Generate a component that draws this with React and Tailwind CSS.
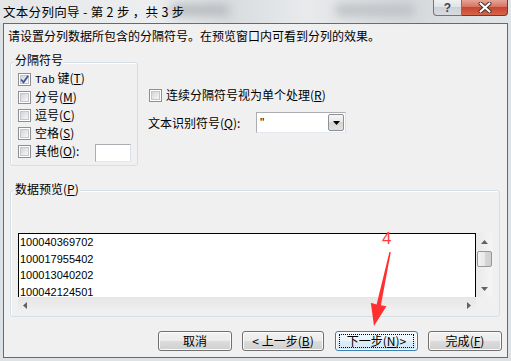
import React from "react";

// Win7 style "Text Import Wizard - step 2 of 3" dialog

function Mn({ k }) {
  return (
    <span>
      (<span className="underline underline-offset-1">{k}</span>)
    </span>
  );
}

function CheckBox({ checked }) {
  return (
    <span className="flex h-[13px] w-[13px] shrink-0 border border-[#8f8f8f] bg-white p-[1px]">
      <span className="relative flex-1 border border-[#c3c7cc] bg-gradient-to-br from-[#d2d5d9] to-[#f7f7f8]">
        {checked && (
          <svg className="absolute -left-[2px] -top-[2px]" width="11" height="11" viewBox="0 0 11 11">
            <path d="M2 5.5 L4.5 8.3 L9.2 1.8" stroke="#3b5699" strokeWidth="1.8" fill="none" />
          </svg>
        )}
      </span>
    </span>
  );
}

function Row({ checked, children, h = "h-[18px]" }) {
  return (
    <div className={`flex items-center gap-[4px] ${h}`}>
      <CheckBox checked={checked} />
      <span className="leading-[12px]">{children}</span>
    </div>
  );
}

function Btn({ w, focus, children }) {
  return (
    <div
      className={`flex h-[20px] ${w} items-center justify-center rounded-[3px] border ${
        focus
          ? "border-[#3c7fb1] bg-[linear-gradient(#f4fafe,#e9f4fb_50%,#dcedf8_50%,#d2e8f6)]"
          : "border-[#707070] bg-[linear-gradient(#f2f2f2,#ebebeb_50%,#dddddd_50%,#cfcfcf)]"
      } shadow-[inset_0_0_0_1px_#fbfbfb]`}
    >
      {focus ? (
        <span className="flex h-[14px] w-[calc(100%-6px)] items-center justify-center border border-dotted border-black leading-[12px]">
          {children}
        </span>
      ) : (
        <span className="leading-[12px]">{children}</span>
      )}
    </div>
  );
}

function Tri({ dir }) {
  const pts = {
    up: "0,4 3.5,0 7,4",
    down: "0,0 7,0 3.5,4",
    left: "4,0 4,7 0,3.5",
    right: "0,0 0,7 4,3.5",
  }[dir];
  const vert = dir === "up" || dir === "down";
  return (
    <svg width={vert ? 7 : 4} height={vert ? 4 : 7} viewBox={vert ? "0 0 7 4" : "0 0 4 7"}>
      <polygon points={pts} fill="#5f6368" />
    </svg>
  );
}

const rows = ["100040369702", "100017955402", "100013040202", "100042124501"];

export default function App() {
  return (
    <div className="relative h-[361px] w-[511px] overflow-hidden bg-[#dde2e7] font-['Noto_Sans_CJK_SC',sans-serif] text-[12px] text-black">
      {/* title bar */}
      <div className="relative flex h-[23px] items-start bg-[linear-gradient(90deg,#e4e6e8,#eceeef_30%,#d9dcdf_45%,#e8eaec_60%,#d6d9dc_80%,#e2e5e8)]">
        <div className="pointer-events-none absolute left-[170px] top-[4px] h-[12px] w-[60px] rounded-full bg-[#b9bcc0] blur-[5px]" />
        <div className="pointer-events-none absolute left-[335px] top-[4px] h-[12px] w-[80px] rounded-full bg-[#bfc2c6] blur-[5px]" />
        <span className="relative pl-[3px] pt-[5px] text-[12.5px] leading-[13px] tracking-[0.3px] whitespace-pre">文本分列向导 - 第 2 步 ，共 3 步</span>
        <div className="relative ml-auto mr-[3px] flex">
          <div className="flex h-[16px] w-[29px] items-center justify-center rounded-bl-[4px] border border-t-0 border-[#6f767e] bg-[linear-gradient(#eef0f2,#dfe2e5_50%,#cdd2d7_50%,#d8dce0)] font-['Liberation_Sans',sans-serif] text-[12px] font-bold leading-[14px] text-[#3d4653]">
            ?
          </div>
          <div className="flex h-[16px] w-[46px] items-center justify-center rounded-br-[4px] border border-l-0 border-t-0 border-[#6b3b35] bg-[linear-gradient(#e6a595,#d77462_45%,#c84530_50%,#d7644c)]">
            <svg width="14" height="11" viewBox="0 0 14 11">
              <path d="M2.5 1.5 L11.5 9.5 M11.5 1.5 L2.5 9.5" stroke="#4a2a26" strokeWidth="4" strokeLinecap="round" />
              <path d="M2.5 1.5 L11.5 9.5 M11.5 1.5 L2.5 9.5" stroke="#ffffff" strokeWidth="2.2" strokeLinecap="round" />
            </svg>
          </div>
        </div>
      </div>

      {/* client area */}
      <div className="mx-[3px] flex h-[335px] flex-col border border-[#666a6f] bg-[#f0f0f0]">
        <div className="pl-[4px] pt-[6px] leading-[12px]">请设置分列数据所包含的分隔符号。在预览窗口内可看到分列的效果。</div>

        <div className="mt-[20px] flex pl-[6px]">
          {/* delimiters group */}
          <div className="flex h-[104px] w-[128px] flex-col rounded-[3px] border border-[#d5dfe5] shadow-[inset_1px_1px_0_#ffffff]">
            <span className="-mt-[9px] ml-[3px] w-fit bg-[#f0f0f0] px-[1px] leading-[12px]">分隔符号</span>
            <div className="mt-[4px] flex flex-col pl-[7px]">
              <Row checked>
                <span className="font-['Liberation_Mono',monospace] text-[11px]">Tab</span> 键<Mn k="T" />
              </Row>
              <Row>
                分号<Mn k="M" />
              </Row>
              <Row>
                逗号<Mn k="C" />
              </Row>
              <Row>
                空格<Mn k="S" />
              </Row>
              <div className="flex h-[18px] items-center gap-[4px]">
                <CheckBox />
                <span className="leading-[12px]">
                  其他<Mn k="O" />:
                </span>
                <div className="ml-auto mr-[6px] mt-[4px] h-[18px] w-[36px] border border-[#abadb3] border-b-[#e3e9ef] border-r-[#dbdfe6] bg-white" />
              </div>
            </div>
          </div>

          {/* right column */}
          <div className="ml-[10px] flex flex-col pt-[25px]">
            <div className="ml-[1px] flex h-[16px] items-center gap-[4px]">
              <CheckBox />
              <span className="leading-[12px]">
                连续分隔符号视为单个处理<Mn k="R" />
              </span>
            </div>
            <div className="mt-[9px] flex h-[21px] items-center">
              <span className="w-[108px] leading-[12px]">
                文本识别符号<Mn k="Q" />:
              </span>
              <div className="flex h-[21px] w-[90px] items-center border border-[#abadb3] border-b-[#e3e9ef] border-r-[#dbdfe6] bg-white">
                <span className="pl-[3px] font-['Liberation_Sans',sans-serif] text-[12px] leading-[12px]">"</span>
                <div className="ml-auto mr-[1px] flex h-[17px] w-[16px] items-center justify-center rounded-[2px] border border-[#8d9195] bg-[linear-gradient(#f6f6f6,#e6e6e6_50%,#d6d6d6_50%,#e0e0e0)]">
                  <svg width="7" height="4" viewBox="0 0 7 4">
                    <polygon points="0,0 7,0 3.5,4" fill="#000" />
                  </svg>
                </div>
              </div>
            </div>
          </div>
        </div>

        {/* data preview group */}
        <div className="ml-[6px] mt-[24px] flex h-[127px] w-[490px] flex-col rounded-[3px] border border-[#d5dfe5] shadow-[inset_1px_1px_0_#ffffff]">
          <span className="-mt-[8px] ml-[3px] w-fit bg-[#f0f0f0] px-[1px] leading-[12px]">
            数据预览<Mn k="P" />
          </span>
          <div className="ml-[7px] mt-[38px] flex h-[80px] w-[474px] flex-col">
            <div className="flex h-[64px]">
              <div className="w-[458px] overflow-hidden border-l border-r border-t border-black bg-white pl-[1px] font-['Liberation_Sans',sans-serif] text-[11px] leading-[16.5px]">
                {rows.map((r) => (
                  <div key={r}>{r}</div>
                ))}
              </div>
              <div className="flex w-[16px] flex-col items-center bg-[linear-gradient(90deg,#e9e9e9,#f5f5f5)]">
                <div className="flex h-[17px] items-center">
                  <Tri dir="up" />
                </div>
                <div className="mt-[1px] h-[16px] w-[15px] rounded-[2px] border border-[#979797] bg-[linear-gradient(90deg,#f3f3f3,#e8e8e8_50%,#d6d6d6_50%,#cfcfcf)]" />
                <div className="mt-auto flex h-[17px] items-center">
                  <Tri dir="down" />
                </div>
              </div>
            </div>
            <div className="flex h-[16px]">
              <div className="flex w-[458px] items-center justify-between bg-[linear-gradient(#e6e6e6,#f1f1f1)] px-[5px]">
                <Tri dir="left" />
                <Tri dir="right" />
              </div>
              <div className="w-[16px] bg-[#f0f0f0]" />
            </div>
          </div>
        </div>

        {/* buttons */}
        <div className="mt-[14px] flex justify-end gap-[10px] pr-[5px]">
          <Btn w="w-[74px]">取消</Btn>
          <Btn w="w-[82px]">
            &lt; 上一步<Mn k="B" />
          </Btn>
          <div className="ml-[1px]">
            <Btn w="w-[83px]" focus>
              下一步<Mn k="N" /> &gt;
            </Btn>
          </div>
          <Btn w="w-[74px]">
            完成<Mn k="F" />
          </Btn>
        </div>
      </div>

      {/* red annotation */}
      <span className="absolute left-[382px] top-[230px] font-['Liberation_Sans',sans-serif] text-[17px] leading-[17px] text-[#ff3b3b]">4</span>
      <svg className="pointer-events-none absolute left-0 top-0" width="511" height="361" viewBox="0 0 511 361">
        <polygon
          points="389.4,252 390.8,252.3 380.9,305.3 386.4,306.2 374,326 370.8,302.8 376.6,304.6"
          fill="#ff3030"
        />
      </svg>
    </div>
  );
}
